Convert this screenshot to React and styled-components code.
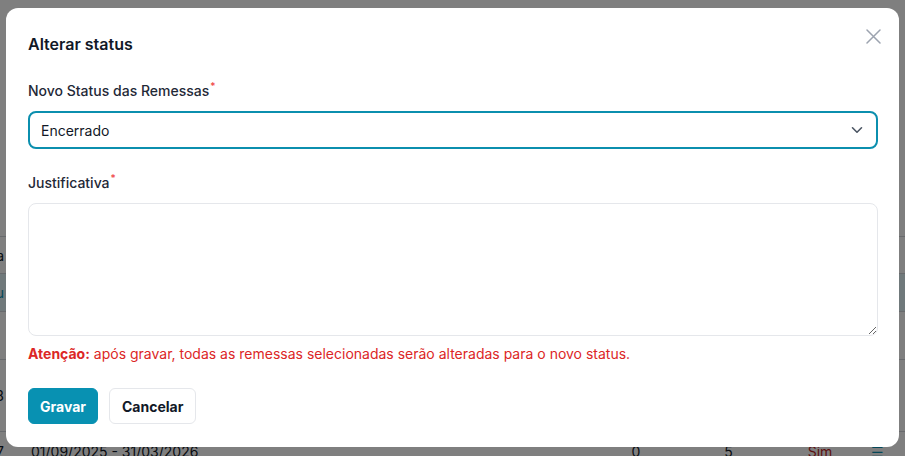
import React from 'react';
import styled, { createGlobalStyle } from 'styled-components';

const GlobalStyle = createGlobalStyle`
    * { box-sizing: border-box; }
    body {
        margin: 0;
        font-family: Inter, "Noto Sans", sans-serif;
        color: #111827;
        background: #ffffff;
    }
`

const Page = styled.div`
    position: relative;
    width: 905px;
    height: 456px;
    overflow: hidden;
    background: #ffffff;
`
const Table = styled.div`
    display: flex;
    flex-direction: column;
    padding-top: 236px;
    margin-left: -40px;
    width: 960px;
`
const Row = styled.div`
    display: grid;
    grid-template-columns: 65px 565px 92px 93px 90px 1fr;
    align-items: center;
    height: ${p => p.$h}px;
    border-top: 1px solid #d1d5db;
    background: ${p => p.$tint ? '#e0f2f7' : 'transparent'};
    font-size: 14px;
    color: #111827;
`
const Cell = styled.div`
    text-align: ${p => p.$align || 'left'};
    padding: 0 6px;
    color: ${p => p.$color || 'inherit'};
    white-space: nowrap;
`
const LeadCell = styled(Cell)`
    text-align: right;
    padding-right: 21px;
`

const Overlay = styled.div`
    position: absolute;
    inset: 0;
    background: rgba(0, 0, 0, 0.5);
    display: flex;
    padding: 8px 6px 9px 6px;
`
const Modal = styled.div`
    position: relative;
    width: 893px;
    height: 439px;
    background: #ffffff;
    border-radius: 12px;
    padding: 24px 21px 23px 22px;
    display: flex;
    flex-direction: column;
`
const Title = styled.h2`
    margin: 0;
    font-size: 16px;
    line-height: 24px;
    font-weight: 600;
    color: #111827;
`
const CloseButton = styled.button`
    position: absolute;
    top: 14px;
    right: 12px;
    width: 28px;
    height: 28px;
    border: none;
    background: none;
    padding: 0;
    display: flex;
    align-items: center;
    justify-content: center;
    cursor: pointer;
`
const Field = styled.div`
    display: flex;
    flex-direction: column;
    margin-top: ${p => p.$top}px;
`
const Label = styled.label`
    font-size: 14px;
    line-height: 20px;
    font-weight: 500;
    color: #1f2937;
    margin-bottom: 10px;

    sup {
        color: #ef4444;
        font-size: 10px;
        margin-left: 1px;
        vertical-align: 6px;
        line-height: 0;
    }
`
const SelectBox = styled.div`
    height: 38px;
    border: 2px solid #0b8fae;
    border-radius: 8px;
    display: flex;
    align-items: center;
    justify-content: space-between;
    padding: 0 13px 0 11px;
    font-size: 14px;
    color: #111827;
`
const TextArea = styled.textarea`
    display: block;
    height: 133px;
    width: 100%;
    border: 1px solid #e5e7eb;
    border-radius: 8px;
    font-family: inherit;
    font-size: 14px;
    padding: 8px 12px;
    outline: none;
`
const Warning = styled.p`
    margin: 8px 0 0 0;
    font-size: 14px;
    line-height: 20px;
    color: #dc2626;

    strong {
        font-weight: 700;
    }
`
const Actions = styled.div`
    display: flex;
    gap: 11px;
    margin-top: 24px;
`
const Button = styled.button`
    height: 36px;
    padding: 0 ${p => p.$primary ? 11 : 12}px;
    border-radius: 6px;
    font-family: inherit;
    font-size: 14px;
    font-weight: 700;
    cursor: pointer;
    border: 1px solid ${p => p.$primary ? '#0891b2' : '#e5e7eb'};
    background: ${p => p.$primary ? '#0891b2' : '#ffffff'};
    color: ${p => p.$primary ? '#ffffff' : '#111827'};
`

const CloseIcon = () => (
    <svg width="15" height="15" viewBox="0 0 15 15" fill="none">
        <path d="M1 1L14 14M14 1L1 14" stroke="#9ca3af" strokeWidth="1.5" strokeLinecap="round" />
    </svg>
)

const Chevron = () => (
    <svg width="12" height="8" viewBox="0 0 12 8" fill="none">
        <path d="M1.5 1.8L6 6.2L10.5 1.8" stroke="#4b5563" strokeWidth="1.6" strokeLinecap="round" strokeLinejoin="round" />
    </svg>
)

const rows = [
    { h: 37, a: 'Data' },
    { h: 38, a: 'Nu', tint: true, color: '#0891b2' },
    { h: 48, a: '', end: 't.' },
    { h: 72, a: '3', end: '☰', endColor: '#0891b2' },
    { h: 40, a: '7', b: '01/09/2025 - 31/03/2026', c: '0', d: '5', e: 'Sim', end: '☰', endColor: '#0891b2' },
]

export default function App() {
    return (
        <>
            <GlobalStyle />
            <Page>
                <Table>
                    {rows.map((r, i) => (
                        <Row key={i} $h={r.h} $tint={r.tint}>
                            <LeadCell $color={r.color}>{r.a}</LeadCell>
                            <Cell>{r.b}</Cell>
                            <Cell $align="center">{r.c}</Cell>
                            <Cell $align="center">{r.d}</Cell>
                            <Cell $align="center" $color="#b91c1c">{r.e}</Cell>
                            <Cell $color={r.endColor}>{r.end}</Cell>
                        </Row>
                    ))}
                </Table>
                <Overlay>
                    <Modal>
                        <Title>Alterar status</Title>
                        <CloseButton aria-label="Fechar">
                            <CloseIcon />
                        </CloseButton>
                        <Field $top={25}>
                            <Label>Novo Status das Remessas<sup>*</sup></Label>
                            <SelectBox>
                                <span>Encerrado</span>
                                <Chevron />
                            </SelectBox>
                        </Field>
                        <Field $top={24}>
                            <Label>Justificativa<sup>*</sup></Label>
                            <TextArea />
                        </Field>
                        <Warning>
                            <strong>Atenção:</strong> após gravar, todas as remessas selecionadas serão alteradas para o novo status.
                        </Warning>
                        <Actions>
                            <Button $primary>Gravar</Button>
                            <Button>Cancelar</Button>
                        </Actions>
                    </Modal>
                </Overlay>
            </Page>
        </>
    )
}
